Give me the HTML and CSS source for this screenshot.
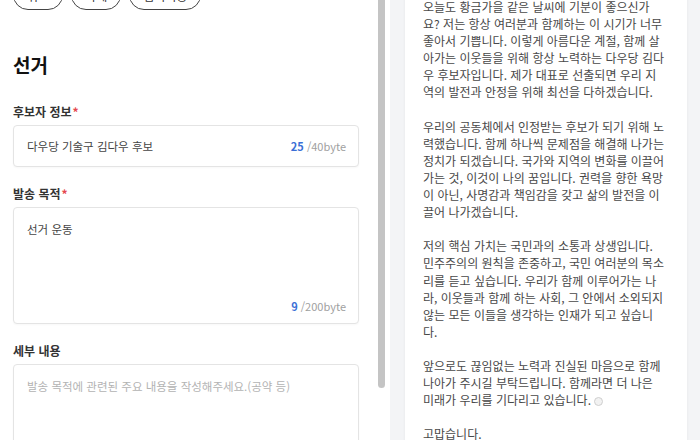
FILE: index.html
```html
<!DOCTYPE html>
<html lang="ko">
<head>
  <meta charset="UTF-8">
  <title>문자 발송 - 선거</title>
  <meta name="viewport" content="width=device-width, initial-scale=1">
  <link rel="stylesheet" href="styles.css">
</head>
<body>
  <div class="page">
    <section class="editor">
      <div class="actions">
        <button class="pill">취소</button>
        <button class="pill">삭제</button>
        <button class="pill">임시저장</button>
      </div>

      <h2 class="title">선거</h2>

      <div class="field">
        <label class="label">후보자 정보<span class="req">*</span></label>
        <div class="box box-line">
          <span class="value">다우당 기술구 김다우 후보</span>
          <span class="count"><b>25</b> /40byte</span>
        </div>
      </div>

      <div class="field">
        <label class="label">발송 목적<span class="req">*</span></label>
        <div class="box box-area">
          <span class="value">선거 운동</span>
          <span class="count"><b>9</b> /200byte</span>
        </div>
      </div>

      <div class="field">
        <label class="label">세부 내용</label>
        <div class="box box-big">
          <span class="placeholder">발송 목적에 관련된 주요 내용을 작성해주세요.(공약 등)</span>
        </div>
      </div>
    </section>

    <div class="scrollbar"><div class="thumb"></div></div>

    <section class="preview">
      <div class="card">
        <p>오늘도 황금가을 같은 날씨에 기분이 좋으신가<br>요? 저는 항상 여러분과 함께하는 이 시기가 너무<br>좋아서 기쁩니다. 이렇게 아름다운 계절, 함께 살<br>아가는 이웃들을 위해 항상 노력하는 다우당 김다<br>우 후보자입니다. 제가 대표로 선출되면 우리 지<br>역의 발전과 안정을 위해 최선을 다하겠습니다.</p>
        <p>우리의 공동체에서 인정받는 후보가 되기 위해 노<br>력했습니다. 함께 하나씩 문제점을 해결해 나가는<br>정치가 되겠습니다. 국가와 지역의 변화를 이끌어<br>가는 것, 이것이 나의 꿈입니다. 권력을 향한 욕망<br>이 아닌, 사명감과 책임감을 갖고 삶의 발전을 이<br>끌어 나가겠습니다.</p>
        <p>저의 핵심 가치는 국민과의 소통과 상생입니다.<br>민주주의의 원칙을 존중하고, 국민 여러분의 목소<br>리를 듣고 싶습니다. 우리가 함께 이루어가는 나<br>라, 이웃들과 함께 하는 사회, 그 안에서 소외되지<br>않는 모든 이들을 생각하는 인재가 되고 싶습니<br>다.</p>
        <p>앞으로도 끊임없는 노력과 진실된 마음으로 함께<br>나아가 주시길 부탁드립니다. 함께라면 더 나은<br>미래가 우리를 기다리고 있습니다. <span class="smile"></span></p>
        <p>고맙습니다.</p>
      </div>
    </section>
  </div>
</body>
</html>
```

FILE: styles.css
```css
body {
  margin: 0;
  font-family: "Noto Sans CJK KR", "Noto Sans", sans-serif;
  background: #fff;
  color: #333;
  overflow: hidden;
}

.page {
  display: flex;
  height: 440px;
  overflow: hidden;
}

/* left: form */
.editor {
  width: 378px;
  box-sizing: border-box;
  padding: 0 19px 0 13px;
  flex-shrink: 0;
}

.actions {
  display: flex;
  gap: 8px;
  margin-top: -20px;
}

.pill {
  height: 30px;
  padding: 0 13px;
  font-family: inherit;
  font-size: 12px;
  color: #333;
  background: #fff;
  border: 1px solid #444;
  border-radius: 16px;
}

.title {
  margin: 42px 0 0;
  font-size: 19px;
  line-height: 25px;
  font-weight: 700;
  color: #111;
}

.field { margin-top: 19px; }
.title + .field { margin-top: 27px; }

.label {
  display: block;
  font-size: 12px;
  line-height: 16px;
  font-weight: 600;
  color: #333;
  margin-bottom: 5px;
}

.req {
  color: #e5484d;
  margin-left: 1px;
}

.box {
  box-sizing: border-box;
  border: 1px solid #e4e4e4;
  border-radius: 4px;
  background: #fff;
  font-size: 11.5px;
  line-height: 16px;
  padding: 12px 12px 12px 13px;
  box-shadow: 0 1px 2px rgba(0, 0, 0, 0.03);
}

.box-line {
  display: flex;
  justify-content: space-between;
  height: 42px;
}

.box-area {
  display: flex;
  flex-direction: column;
  justify-content: space-between;
  height: 117px;
  padding: 13px 12px 9px 13px;
}

.box-area .count { align-self: flex-end; }

.box-big {
  height: 110px;
  padding-top: 13px;
}

.value { color: #444; }

.placeholder { color: #b3b3b3; }

.count {
  font-size: 11px;
  color: #a0a0a0;
}
.count b {
  color: #3b6fd6;
  font-weight: 700;
}

/* scrollbar of the form pane */
.scrollbar {
  width: 12px;
  flex-shrink: 0;
}

.thumb {
  width: 7px;
  height: 388px;
  background: #c4c4c4;
  border-radius: 0 0 4px 4px;
}

/* right: preview */
.preview {
  flex: 1;
  min-width: 0;
  background: #f3f4f6;
  padding: 0 13px 0 15px;
}

.card {
  margin-top: -20px;
  padding: 18px 18px 20px;
  background: #fff;
  box-shadow: 0 0 3px rgba(0, 0, 0, 0.06);
  font-size: 12px;
  line-height: 17.1px;
  color: #484848;
  white-space: nowrap;
  overflow: hidden;
}

.card p { margin: 0 0 17.1px; }

.smile {
  display: inline-block;
  width: 7px;
  height: 7px;
  border: 1.5px solid #cfcfcf;
  border-radius: 50%;
  background: #f2f2f2;
  vertical-align: -1px;
}
```
